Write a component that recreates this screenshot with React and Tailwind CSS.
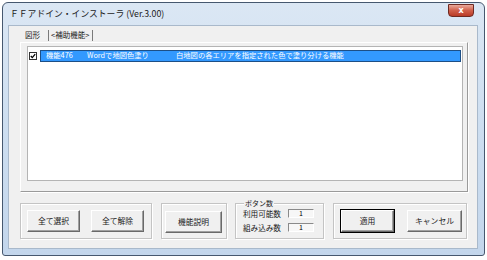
import React from "react";

const F = { fontFamily: '"Noto Sans CJK JP", "Noto Sans", sans-serif' };

function Btn({ children, w, def }) {
  return (
    <div
      className={`h-[22px] flex items-center justify-center text-[7.8px] text-[#1a1a1a] bg-[#f0f0f0] border-l border-t border-l-white border-t-white border-r border-b border-r-[#696969] border-b-[#696969] shadow-[inset_-1px_-1px_0_#a0a0a0] ${def ? "outline outline-1 outline-black" : ""}`}
      style={{ width: w }}
    >
      {children}
    </div>
  );
}

function Group({ children, w, className = "" }) {
  return (
    <div
      className={`relative h-[36px] border border-[#c4c4c4] shadow-[inset_1px_1px_0_#ffffff,1px_1px_0_#ffffff] ${className}`}
      style={{ width: w }}
    >
      {children}
    </div>
  );
}

function NumBox() {
  return (
    <div className="w-[26px] h-[9px] bg-[#f7f7f7] border border-l-[#8a8a8a] border-t-[#8a8a8a] border-r-white border-b-white flex items-center justify-center text-[7px] leading-none text-black">
      1
    </div>
  );
}

export default function App() {
  return (
    <div className="w-[487px] h-[260px] bg-white pt-[2px] pl-[2px]" style={F}>
      <div className="w-[483px] h-[254px] rounded-t-[6px] rounded-b-[3px] border border-[#46586f] bg-gradient-to-b from-[#dbe7f4] via-[#cddef0] to-[#c3d6ec] flex flex-col">
        {/* title bar */}
        <div className="h-[22px] flex items-start justify-between pl-[7px] pr-[10px]">
          <div className="pt-[5px] text-[8.8px] leading-[12px] text-[#1c1c1c]">
            ＦＦアドイン・インストーラ (Ver.3.00)
          </div>
          <div className="w-[26px] h-[13px] mt-[1px] rounded-b-[4px] border border-[#6e2a22] bg-gradient-to-b from-[#e9a99b] via-[#d05f4a] to-[#b93a26] flex items-center justify-center text-white text-[8px] font-bold leading-none" style={{ fontFamily: '"DejaVu Sans", sans-serif' }}>
            x
          </div>
        </div>
        {/* panel */}
        <div className="ml-[5px] w-[470px] h-[224px] bg-[#f0f0f0] border border-[#a9b9cb] pl-[11px] pt-[2px] flex flex-col">
          {/* tabs */}
          <div className="h-[14px] flex items-center pl-[5px] text-[7.5px] leading-none text-[#1a1a1a]">
            <span className="pr-[3px]">図形</span>
            <span className="ml-[5px] h-[11px] border-l border-[#7a7a7a] flex items-center pl-[2px] pr-[3px] border-r">
              &lt;補助機能&gt;
            </span>
          </div>
          {/* tab frame */}
          <div className="w-[448px] h-[150px] border border-l-white border-t-white border-r-[#9a9a9a] border-b-[#9a9a9a] shadow-[1px_1px_0_#ffffff] pl-[6px] pt-[3px]">
            <div className="w-[436px] h-[135px] bg-white border border-[#b4b4b4] pt-[3px] pl-[1px]">
              <div className="flex items-center h-[12px]">
                <div className="w-[8px] h-[8px] border border-[#333] bg-white flex items-center justify-center">
                  <svg width="6" height="6" viewBox="0 0 6 6">
                    <path d="M0.8 3 L2.3 4.6 L5.2 1.2" stroke="#000" strokeWidth="1.3" fill="none" />
                  </svg>
                </div>
                <div className="ml-[3px] w-[421px] h-[12px] bg-[#3399ff] border border-[#1d4f86] flex items-center pl-[5px] text-white text-[7.3px] leading-none whitespace-nowrap">
                  <span className="w-[41px]">機能476</span>
                  <span className="w-[89px]">Wordで地図色塗り</span>
                  <span>白地図の各エリアを指定された色で塗り分ける機能</span>
                </div>
              </div>
            </div>
          </div>
          {/* bottom row */}
          <div className="mt-[11px] flex gap-[9px] items-start">
            <Group w={132} className="pl-[6px] pt-[6px] flex gap-[11px]">
              <Btn w={53}>全て選択</Btn>
              <Btn w={53}>全て解除</Btn>
            </Group>
            <Group w={66} className="pl-[3px] pt-[7px]">
              <Btn w={57}>機能説明</Btn>
            </Group>
            <Group w={89} className="-ml-[1px] h-[34px] pl-[7px] pt-[4px] flex flex-col gap-[5px] text-[7.6px] leading-none text-[#1a1a1a]">
              <span className="absolute -top-[5px] left-[8px] px-[1px] bg-[#f0f0f0] text-[7px] leading-[9px]">ボタン数</span>
              <div className="flex items-center gap-[4px] mt-[1px]">
                <span className="w-[41px]">利用可能数</span>
                <NumBox />
              </div>
              <div className="flex items-center gap-[4px]">
                <span className="w-[41px]">組み込み数</span>
                <NumBox />
              </div>
            </Group>
            <Group w={134} className="pl-[7px] pt-[6px] flex gap-[13px]">
              <Btn w={53} def>適用</Btn>
              <Btn w={55}>キャンセル</Btn>
            </Group>
          </div>
        </div>
      </div>
    </div>
  );
}
